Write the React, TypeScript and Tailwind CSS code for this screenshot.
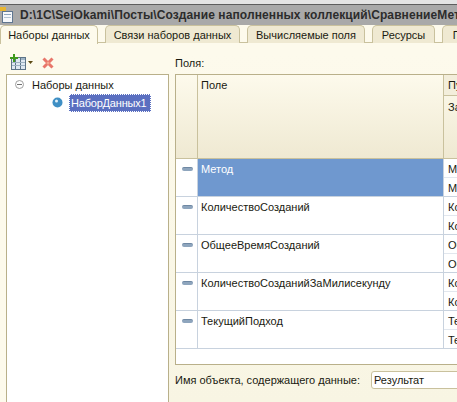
const rows = [
  { name: "Метод", path: ["Метод", "Метод"] },
  { name: "КоличествоСозданий", path: ["КоличествоСозданий", "КоличествоСозданий"] },
  { name: "ОбщееВремяСозданий", path: ["ОбщееВремяСозданий", "ОбщееВремяСозданий"] },
  { name: "КоличествоСозданийЗаМилисекунду", path: ["КоличествоСозданий", "КоличествоСозданий"] },
  { name: "ТекущийПодход", path: ["ТекущийПодход", "ТекущийПодход"] },
]

function WindowIcon() {
  return (
    <svg width="14" height="18" viewBox="0 0 14 18" className="shrink-0">
      <rect x="0" y="1" width="6" height="4" fill="#e8b530" />
      <rect x="2.500" y="5.500" width="10" height="11" fill="#f6f8fb" stroke="#5f7690" />
      <rect x="4" y="8" width="7" height="1" fill="#8fa5bd" />
      <rect x="4" y="11" width="7" height="1" fill="#b4c3d2" />
    </svg>
  )
}

function AddIcon() {
  return (
    <svg width="24" height="16" viewBox="0 0 24 16">
      <rect x="1.500" y="3.500" width="14" height="12" fill="#dfe8f2" stroke="#5d7488" />
      <rect x="5" y="4" width="1" height="11" fill="#5d7488" />
      <rect x="10" y="4" width="1" height="11" fill="#5d7488" />
      <rect x="11" y="4" width="4" height="2" fill="#9fb4c6" />
      <rect x="2" y="8" width="13" height="1" fill="#9db1c2" />
      <rect x="2" y="11" width="13" height="1" fill="#9db1c2" />
      <path d="M3 0h2v3h3v2H5v3H3V5H0V3h3z" fill="#3f9a1c" />
      <path d="M18 7h5l-2.500 3z" fill="#5c4a14" />
    </svg>
  )
}

function DeleteIcon() {
  return (
    <svg width="12" height="12" viewBox="0 0 12 12" className="mt-[3px]">
      <path d="M1.500 1.500L10.500 10.500M10.500 1.500L1.500 10.500" stroke="#e8766a" strokeWidth="3" />
      <circle cx="6" cy="6" r="1.500" fill="#f4a68f" />
    </svg>
  )
}

function DataSetIcon() {
  return (
    <svg width="11" height="11" viewBox="0 0 11 11">
      <circle cx="5.500" cy="5.500" r="5" fill="#3f8fc4" />
      <circle cx="4.500" cy="4" r="1.500" fill="#e4f1fa" />
    </svg>
  )
}

function Tab({ label, active, width }: { label: string; active?: boolean; width: string }) {
  return (
    <div
      className={`${width} shrink-0 flex items-center justify-center rounded-t-[5px] border border-b-0 border-[#c9c19d] ${
        active ? "bg-[#fdfaec] h-[19px] -mb-px relative" : "bg-[#efe9d2] h-[18px]"
      }`}
    >
      {label}
    </div>
  )
}

export default function App() {
  return (
    <div className="w-[457px] h-[402px] overflow-hidden flex flex-col bg-[#fdfaec] text-[11px] leading-[14px] text-[#1a1a10] font-['Liberation_Sans',sans-serif]">
      <div className="h-[4px] shrink-0 bg-[#e4e4e4]" />
      <div className="h-[21px] shrink-0 border-t border-t-[#5e5e5e] bg-[#a9a9a9] flex items-center gap-[6px] whitespace-nowrap">
        <WindowIcon />
        <span className="text-[12px] tracking-[0.1px] font-bold text-[#2c2c2c]">
          D:\1C\SeiOkami\Посты\Создание наполненных коллекций\СравнениеМетодов
        </span>
      </div>

      <div className="h-[18px] shrink-0 flex gap-[7px] border-b border-[#c9c19d] whitespace-nowrap">
        <Tab label="Наборы данных" active width="w-[98px]" />
        <Tab label="Связи наборов данных" width="w-[135px]" />
        <Tab label="Вычисляемые поля" width="w-[118px]" />
        <Tab label="Ресурсы" width="w-[63px]" />
        <Tab label="Параметры" width="w-[80px]" />
      </div>

      <div className="flex-1 min-h-0 flex pl-[6px] pt-[11px]">
        <div className="w-[163px] shrink-0 flex flex-col">
          <div className="h-[20px] shrink-0 flex items-start gap-[8px] pl-[4px]">
            <AddIcon />
            <DeleteIcon />
          </div>
          <div className="flex-1 bg-white border border-[#b9b08a] border-b-0 pt-px">
            <div className="h-[17px] flex items-center pl-[8px] gap-[8px]">
              <span className="w-[9px] h-[9px] rounded-full border border-[#a0a0a0] flex items-center justify-center">
                <span className="w-[5px] h-px bg-[#707070]" />
              </span>
              <span>Наборы данных</span>
            </div>
            <div className="h-[19px] flex items-center pl-[45px] gap-[6px]">
              <DataSetIcon />
              <span className="h-[18px] w-[82px] pl-px flex items-center tracking-[-0.2px] whitespace-nowrap bg-[#5a6fc0] text-white border border-dotted border-white">
                НаборДанных1
              </span>
            </div>
          </div>
        </div>

        <div className="flex-1 min-w-0 pl-[6px] flex flex-col bg-gradient-to-b from-[#fdfaec] to-[#f8f5e3]">
          <div className="h-[20px] shrink-0 flex items-center pb-[3px]">Поля:</div>
          <div className="h-[291px] shrink-0 border border-[#b9b08a] border-r-0 bg-white overflow-hidden">
            <div className="h-[84px] flex border-b border-[#c9c19d]">
              <div className="w-[22px] shrink-0 border-r border-[#c9c19d] bg-gradient-to-b from-[#fdfaec] to-[#efe9d2]" />
              <div className="w-[246px] shrink-0 border-r border-[#c9c19d] pl-[3px] pt-[3px] bg-gradient-to-b from-[#fdfaec] to-[#efe9d2]">
                Поле
              </div>
              <div className="flex-1 whitespace-nowrap bg-gradient-to-b from-[#fdfaec] to-[#efe9d2]">
                <div className="h-[21px] border-b border-[#c9c19d] pl-[4px] pt-[3px] bg-[#f3eedb]">Путь</div>
                <div className="pl-[4px] pt-[4px]">Заголовок</div>
              </div>
            </div>
            {rows.map((row, i) => (
              <div key={row.name} className="h-[38px] flex border-b border-[#c8d2de]">
                <div className="w-[22px] shrink-0 border-r border-[#c8d2de] pt-[8px] pl-[6px]">
                  <div className="w-[11px] h-[4px] rounded-[2px] bg-[#8ea5bd] border-t border-[#6f88a3]" />
                </div>
                <div
                  className={`w-[246px] shrink-0 border-r border-[#c8d2de] pl-[3px] pt-[3px] whitespace-nowrap ${
                    i === 0 ? "bg-[#6f98cf] text-white" : ""
                  }`}
                >
                  {row.name}
                </div>
                <div className="flex-1 whitespace-nowrap">
                  <div className="h-[19px] border-b border-[#e2e7ee] pl-[4px] pt-[3px]">{row.path[0]}</div>
                  <div className="pl-[4px] pt-[3px]">{row.path[1]}</div>
                </div>
              </div>
            ))}
          </div>
          <div className="flex-1 flex items-center whitespace-nowrap pb-[8px]">
            <span className="w-[196px] shrink-0">Имя объекта, содержащего данные:</span>
            <div className="h-[18px] w-[120px] shrink-0 bg-white border border-[#c9c19d] rounded-l-[3px] pl-[2px] flex items-center">
              Результат
            </div>
          </div>
        </div>
      </div>
    </div>
  )
}
